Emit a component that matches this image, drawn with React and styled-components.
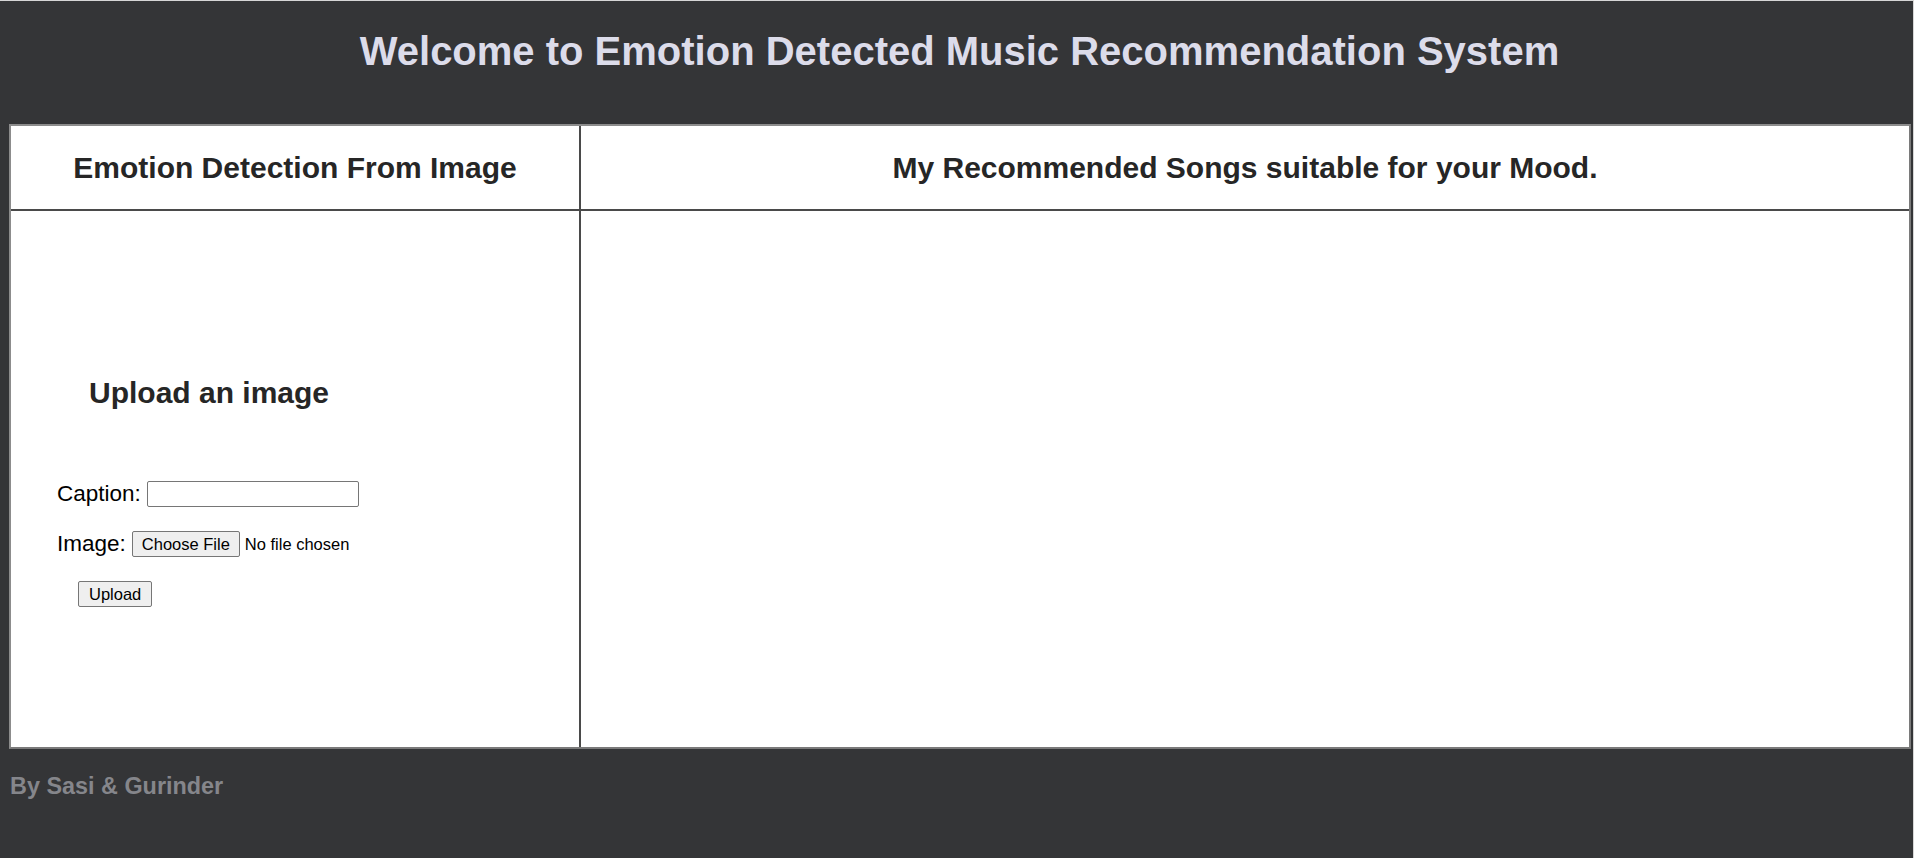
import React from "react";
import styled, { createGlobalStyle } from "styled-components";

const GlobalStyle = createGlobalStyle`
  html, body {
    margin: 0;
    padding: 0;
    background: #343537;
  }
  body {
    font-family: "Liberation Sans", Arial, sans-serif;
  }
`;

const App = () => {
  return (
    <>
      <GlobalStyle />
      <Page>
        <Header>
          <Title>Welcome to Emotion Detected Music Recommendation System</Title>
        </Header>
        <Board>
          <HeadCell>Emotion Detection From Image</HeadCell>
          <HeadCell last>My Recommended Songs suitable for your Mood.</HeadCell>
          <UploadCell>
            <UploadTitle>Upload an image</UploadTitle>
            <FormRow>
              <Label htmlFor="caption">Caption:</Label>
              <TextInput id="caption" type="text" />
            </FormRow>
            <FormRow>
              <Label htmlFor="image">Image:</Label>
              <FileInput id="image" type="file" />
            </FormRow>
            <UploadButton type="button">Upload</UploadButton>
          </UploadCell>
          <SongsCell />
        </Board>
        <Footer>By Sasi &amp; Gurinder</Footer>
      </Page>
    </>
  );
};

export default App;

const Page = styled.div`
  min-height: 858px;
  box-sizing: border-box;
  background: #343537;
  border-top: 1px solid #d6d6d6;
  border-right: 1px solid #d6d6d6;
`;

const Header = styled.header`
  height: 123px;
  padding: 27px 0 0 6px;
  box-sizing: border-box;
`;

const Title = styled.h1`
  margin: 0;
  font-size: 40px;
  line-height: 46px;
  font-weight: bold;
  text-align: center;
  color: #dcdcea;
`;

const Board = styled.div`
  margin: 0 2px 0 9px;
  display: grid;
  grid-template-columns: 570px 1fr;
  grid-template-rows: 85px 536px;
  background: #fff;
  border: 2px solid #8c8c8c;
  border-right-color: #7a7a7a;
  border-bottom-color: #7a7a7a;
`;

const HeadCell = styled.div`
  display: flex;
  align-items: center;
  justify-content: center;
  font-size: 30px;
  font-weight: bold;
  color: #262626;
  border-bottom: 2px solid #4a4a4a;
  border-right: ${(p) => (p.last ? "none" : "2px solid #4a4a4a")};
`;

const UploadCell = styled.div`
  display: flex;
  flex-direction: column;
  justify-content: center;
  align-items: flex-start;
  border-right: 2px solid #4a4a4a;
`;

const SongsCell = styled.div``;

const UploadTitle = styled.h2`
  margin: 25px 0 71px 78px;
  font-size: 30px;
  line-height: 34px;
  font-weight: bold;
  color: #262626;
`;

const FormRow = styled.div`
  display: flex;
  align-items: center;
  margin-left: 46px;
  margin-bottom: 24px;
  height: 26px;
`;

const Label = styled.label`
  font-size: 22.5px;
  color: #000;
  margin-right: 6px;
`;

const TextInput = styled.input`
  width: 212px;
  height: 26px;
  box-sizing: border-box;
  border: 1px solid #767676;
  border-radius: 2px;
  padding: 1px 3px;
  font-size: 16.5px;
  font-family: "Liberation Sans", Arial, sans-serif;
`;

const FileInput = styled.input`
  font-size: 16.5px;
  font-family: "Liberation Sans", Arial, sans-serif;
  color: #000;

  &::file-selector-button {
    height: 26px;
    padding: 0 9px;
    margin-right: 5px;
    border: 1px solid #767676;
    border-radius: 2px;
    background: #efefef;
    font-size: 16.5px;
    font-family: "Liberation Sans", Arial, sans-serif;
    color: #000;
  }
`;

const UploadButton = styled.button`
  margin-left: 67px;
  height: 26px;
  padding: 0 10px;
  border: 1px solid #767676;
  border-radius: 2px;
  background: #efefef;
  font-size: 16.5px;
  font-family: "Liberation Sans", Arial, sans-serif;
  color: #000;
`;

const Footer = styled.h3`
  margin: 23px 0 0 10px;
  font-size: 23.4px;
  line-height: 28px;
  font-weight: bold;
  color: #85868b;
`;
